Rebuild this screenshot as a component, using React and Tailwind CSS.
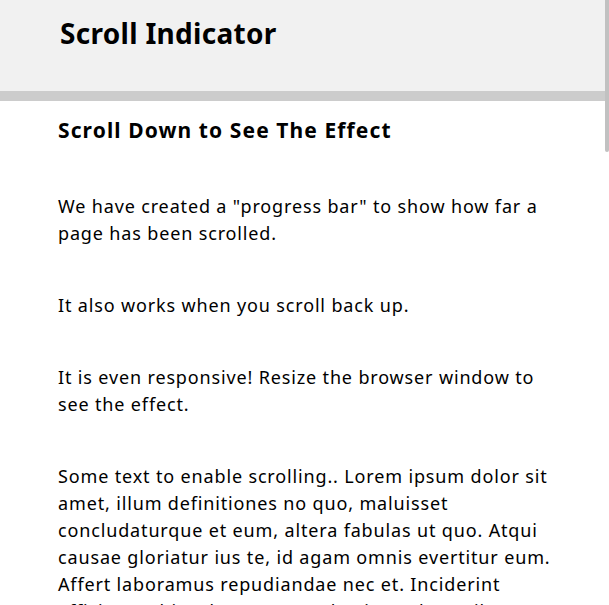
import { useState } from 'react';

const paragraphs = [
  'We have created a "progress bar" to show how far a page has been scrolled.',
  'It also works when you scroll back up.',
  'It is even responsive! Resize the browser window to see the effect.',
  'Some text to enable scrolling.. Lorem ipsum dolor sit amet, illum definitiones no quo, maluisset concludaturque et eum, altera fabulas ut quo. Atqui causae gloriatur ius te, id agam omnis evertitur eum. Affert laboramus repudiandae nec et. Inciderint efficiantur his ad. Eum no molestiae voluptatibus.',
];

export default function App() {
  const [progress] = useState(0);

  return (
    <div className="relative h-[605px] overflow-hidden bg-white text-black font-['Noto_Sans',sans-serif]">
      {/* Header */}
      <header className="bg-[#f1f1f1]">
        <div className="h-[91px] pl-[60px] pt-[14px]">
          <h2 className="text-[28px] font-bold leading-[38px] tracking-[0.3px]">Scroll Indicator</h2>
        </div>
        <div className="h-[10px] w-full bg-[#cccccc]">
          <div className="h-full bg-[#04aa6d]" style={{ width: `${progress}%` }} />
        </div>
      </header>

      {/* Content */}
      <main className="pl-[58px] pr-[53px] pt-[14px]">
        <h3 className="text-[21px] font-bold leading-[30px] tracking-[1.1px]">Scroll Down to See The Effect</h3>
        <div className="mt-[48px] flex flex-col gap-[45px]">
          {paragraphs.map((p, i) => (
            <p key={i} className="text-[18px] leading-[27px] tracking-[0.85px]">{p}</p>
          ))}
        </div>
      </main>

      {/* overlay scrollbar thumb */}
      <div className="absolute right-0 top-0 h-[152px] w-[4px] rounded-b-sm bg-[#c1c1c1]" />
    </div>
  );
}
